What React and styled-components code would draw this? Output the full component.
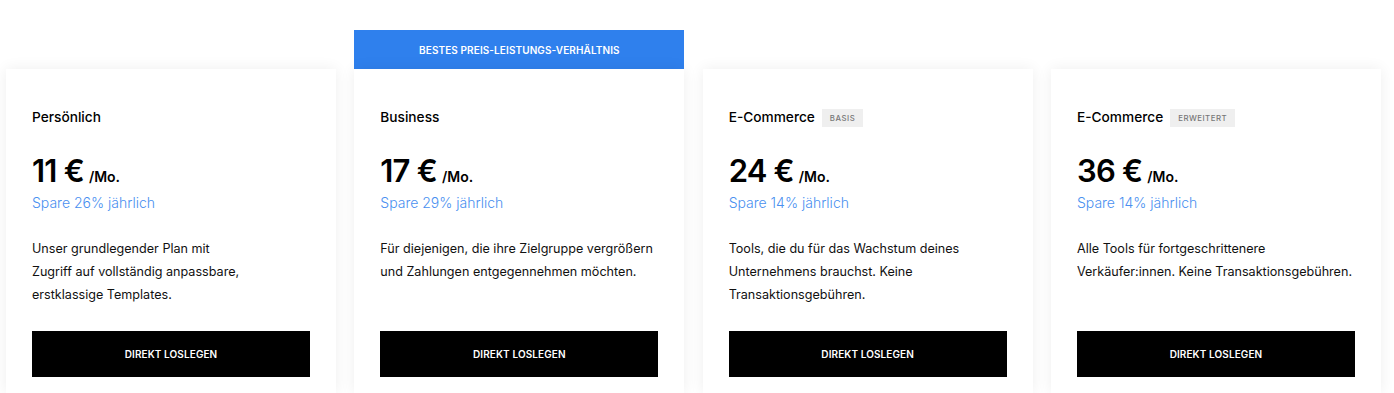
import React from 'react';
import styled, { createGlobalStyle } from 'styled-components';

const plans = [
  {
    name: 'Persönlich',
    price: '11 €',
    save: 'Spare 26% jährlich',
    text: 'Unser grundlegender Plan mit Zugriff auf vollständig anpassbare, erstklassige Templates.',
    textWidth: 212,
  },
  {
    name: 'Business',
    price: '17 €',
    save: 'Spare 29% jährlich',
    text: 'Für diejenigen, die ihre Zielgruppe vergrößern und Zahlungen entgegennehmen möchten.',
    banner: 'Bestes Preis-Leistungs-Verhältnis',
    textWidth: 280,
  },
  {
    name: 'E-Commerce',
    badge: 'Basis',
    price: '24 €',
    save: 'Spare 14% jährlich',
    text: 'Tools, die du für das Wachstum deines Unternehmens brauchst. Keine Transaktionsgebühren.',
    textWidth: 240,
  },
  {
    name: 'E-Commerce',
    badge: 'Erweitert',
    price: '36 €',
    save: 'Spare 14% jährlich',
    text: 'Alle Tools für fortgeschrittenere Verkäufer:innen. Keine Transaktionsgebühren.',
    textWidth: 280,
  },
];

function App() {
  return (
    <>
      <GlobalStyle />
      <PlanGrid>
        {plans.map((plan, i) => (
          <Column key={i}>
            {plan.banner ? <Banner>{plan.banner}</Banner> : <BannerSpace />}
            <Card>
              <TitleRow>
                <PlanName>{plan.name}</PlanName>
                {plan.badge && <Badge>{plan.badge}</Badge>}
              </TitleRow>
              <PriceRow>
                <Price>{plan.price}</Price>
                <Per>/Mo.</Per>
              </PriceRow>
              <Save>{plan.save}</Save>
              <Description $width={plan.textWidth}>{plan.text}</Description>
              <Button>Direkt loslegen</Button>
            </Card>
          </Column>
        ))}
      </PlanGrid>
    </>
  );
}

const GlobalStyle = createGlobalStyle`
  body {
    margin: 0;
    background: #fff;
    font-family: Inter, "Noto Sans", sans-serif;
    color: #000;
    -webkit-font-smoothing: antialiased;
  }
`;

const PlanGrid = styled.div`
  display: grid;
  grid-template-columns: repeat(4, 1fr);
  column-gap: 18.3px;
  padding: 30px 13px 0 6px;
  height: 393px;
  box-sizing: border-box;
  overflow: hidden;
`;

const Column = styled.div`
  display: flex;
  flex-direction: column;
`;

const Banner = styled.div`
  height: 39px;
  background: #2f80ed;
  color: #fff;
  font-size: 10px;
  font-weight: 600;
  text-transform: uppercase;
  display: flex;
  align-items: center;
  justify-content: center;
  letter-spacing: 0.1px;
`;

const BannerSpace = styled.div`
  height: 39px;
`;

const Card = styled.div`
  flex: 1;
  background: #fff;
  box-shadow: 0 0 14px rgba(0, 0, 0, 0.07);
  padding: 37px 26px 0;
  display: flex;
  flex-direction: column;
`;

const TitleRow = styled.div`
  display: flex;
  align-items: center;
  gap: 7px;
  height: 22px;
`;

const PlanName = styled.div`
  font-size: 13.7px;
  font-weight: 500;
`;

const Badge = styled.span`
  background: #efefef;
  color: #777;
  font-size: 7.8px;
  font-weight: 500;
  text-transform: uppercase;
  letter-spacing: 0.5px;
  padding: 0 8px;
  height: 18px;
  display: inline-flex;
  align-items: center;
  margin-top: 1px;
`;

const PriceRow = styled.div`
  display: flex;
  align-items: baseline;
  gap: 5px;
  margin-top: 24px;
  height: 40px;
`;

const Price = styled.span`
  font-size: 31px;
  font-weight: 600;
  letter-spacing: -0.8px;
`;

const Per = styled.span`
  font-size: 14px;
  font-weight: 600;
`;

const Save = styled.div`
  color: #4a90f0;
  font-size: 14px;
  font-weight: 300;
  margin-top: 2px;
`;

const Description = styled.p`
  margin: 26px 0 0;
  font-size: 12.6px;
  line-height: 23px;
  height: 69px;
  max-width: ${(p) => p.$width}px;
  color: #111;
`;

const Button = styled.button`
  margin-top: 25px;
  height: 46px;
  border: 0;
  background: #000;
  color: #fff;
  font-family: inherit;
  font-size: 10px;
  font-weight: 600;
  text-transform: uppercase;
  letter-spacing: 0.1px;
  cursor: pointer;
`;

export default App;
